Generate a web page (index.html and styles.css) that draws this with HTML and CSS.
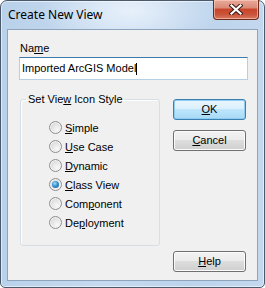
FILE: index.html
```html
<!DOCTYPE html>
<html>
<head>
<meta charset="utf-8">
<link rel="stylesheet" href="styles.css">
</head>
<body>
<div class="window">
  <div class="titlebar">
    <span class="title">Create New View</span>
    <div class="close">
      <svg width="14" height="11" viewBox="0 0 14 11">
        <path d="M2.5 1.5 L11.5 9.5 M11.5 1.5 L2.5 9.5" stroke="#3a1a14" stroke-width="4.2" stroke-linecap="square" fill="none"/>
        <path d="M2.5 1.5 L11.5 9.5 M11.5 1.5 L2.5 9.5" stroke="#ffffff" stroke-width="2.2" stroke-linecap="square" fill="none"/>
      </svg>
    </div>
  </div>
  <div class="client">
    <div class="name-label">Na<u>m</u>e</div>
    <div class="textbox">Imported ArcGIS Model<span class="caret"></span></div>
    <div class="main">
      <fieldset class="group">
        <legend>Set Vie<u>w</u> Icon Style</legend>
        <div class="radio-list">
          <div class="radio"><span class="rb"></span><span><u>S</u>imple</span></div>
          <div class="radio"><span class="rb"></span><span><u>U</u>se Case</span></div>
          <div class="radio"><span class="rb"></span><span><u>D</u>ynamic</span></div>
          <div class="radio"><span class="rb checked"><span class="dot"></span></span><span><u>C</u>lass View</span></div>
          <div class="radio"><span class="rb"></span><span>Com<u>p</u>onent</span></div>
          <div class="radio"><span class="rb"></span><span>De<u>p</u>loyment</span></div>
        </div>
      </fieldset>
      <div class="buttons">
        <div class="btn default"><u>O</u>K</div>
        <div class="btn"><u>C</u>ancel</div>
        <div class="btn help"><u>H</u>elp</div>
      </div>
    </div>
  </div>
</div>
</body>
</html>
```
FILE: styles.css
```css
html, body {
  margin: 0;
  padding: 0;
}
body {
  width: 265px;
  height: 288px;
  background: #ffffff;
  font-family: "Liberation Sans", Arial, sans-serif;
  font-size: 11px;
  color: #000;
}
.window {
  box-sizing: border-box;
  width: 265px;
  height: 288px;
  border: 1px solid #4b5a6b;
  border-radius: 7px 7px 5px 5px;
  background:
    radial-gradient(ellipse 90px 40px at 130px 10px, rgba(235,243,252,0.9), rgba(235,243,252,0) 100%),
    linear-gradient(90deg, #b9d1ea 0%, #c6daef 40%, #bcd3ec 70%, #c3d8ee 100%);
  display: flex;
  flex-direction: column;
  padding: 0 6px 6px 6px;
  box-shadow: inset 0 0 0 1px rgba(255,255,255,0.55);
}
.titlebar {
  height: 28px;
  display: flex;
  justify-content: space-between;
  align-items: flex-start;
}
.title {
  font-family: "Noto Sans", "Open Sans", sans-serif;
  font-size: 12px;
  line-height: 16px;
  margin-top: 6px;
  margin-left: 1px;
  color: #000;
}
.close {
  box-sizing: border-box;
  width: 46px;
  height: 20px;
  margin-top: -1px;
  margin-right: -1px;
  border: 1px solid #6e2a1d;
  border-top: none;
  border-radius: 0 0 4px 4px;
  background: linear-gradient(#e9a99a 0%, #db8b78 40%, #c8452b 50%, #c9533a 75%, #d87a5f 100%);
  box-shadow: inset 0 0 0 1px rgba(255,215,200,0.55);
  display: flex;
  align-items: center;
  justify-content: center;
}
.client {
  flex: 1;
  display: flex;
  flex-direction: column;
  border: 1px solid #8ea4bc;
  background: #f0f0f0;
}
.name-label {
  line-height: 13px;
  margin: 12px 0 0 12px;
}
.textbox {
  box-sizing: border-box;
  width: 229px;
  height: 23px;
  margin: 2px 0 0 11px;
  border: 1px solid #b5cfe7;
  border-top-color: #3d7bad;
  background: #fff;
  padding: 4px 2px 0 2px;
  line-height: 13px;
  display: flex;
  align-items: flex-start;
  white-space: nowrap;
}
.caret {
  display: inline-block;
  width: 1px;
  height: 12px;
  margin-top: 1px;
  background: #000;
}
.main {
  flex: 1;
  display: flex;
  margin-top: 13px;
  padding-bottom: 8px;
}
.group {
  box-sizing: border-box;
  width: 140px;
  height: 153px;
  margin: 0 0 0 12px;
  padding: 0;
  border: 1px solid #d5dfe5;
  border-radius: 3px;
  box-shadow: inset 1px 1px 0 #fff;
  min-inline-size: 0;
}
.group legend {
  margin-left: 5px;
  padding: 0 2px;
  line-height: 12px;
}
.radio-list {
  display: flex;
  flex-direction: column;
  padding: 13px 0 0 28px;
}
.radio {
  height: 19px;
  display: flex;
  align-items: center;
  gap: 3px;
}
.rb {
  box-sizing: border-box;
  width: 13px;
  height: 13px;
  border-radius: 50%;
  border: 1px solid #8f8f8f;
  background: radial-gradient(circle at 65% 70%, #f8f8f8 0%, #e6e6e6 45%, #cfcfcf 100%);
  box-shadow: inset 0 0 0 1px #f4f4f4;
  display: flex;
  align-items: center;
  justify-content: center;
}
.dot {
  width: 7px;
  height: 7px;
  border-radius: 50%;
  background: radial-gradient(circle at 40% 35%, #a6dcfa 0%, #3e9ad8 40%, #0f4e8c 100%);
}
.buttons {
  display: flex;
  flex-direction: column;
  margin-left: 13px;
  padding-top: 6px;
}
.btn {
  box-sizing: border-box;
  width: 73px;
  height: 21px;
  border: 1px solid #707070;
  border-radius: 3px;
  background: linear-gradient(#f2f2f2 0%, #ebebeb 50%, #dddddd 50%, #cfcfcf 100%);
  box-shadow: inset 0 0 0 1px #fbfbfb;
  display: flex;
  align-items: center;
  justify-content: center;
  line-height: 13px;
}
.btn + .btn {
  margin-top: 10px;
}
.btn.default {
  border-color: #3c7fb1;
  background: linear-gradient(#eaf6fd 0%, #d9f0fc 50%, #bee6fd 50%, #a7d9f5 100%);
  box-shadow: inset 0 0 0 1px #8fcdf3;
}
.btn.help {
  margin-top: auto;
}
```
